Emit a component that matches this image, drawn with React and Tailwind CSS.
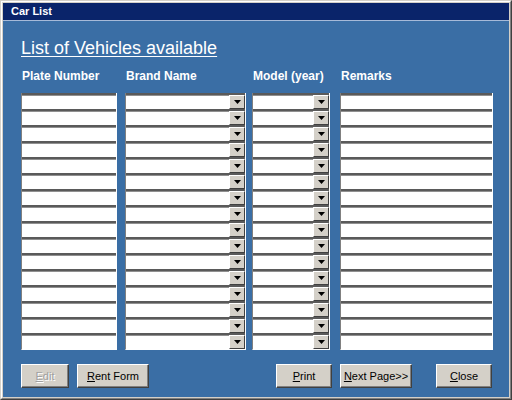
import React from 'react';

const ROWS = 16;

const columns = [
  { label: 'Plate Number', width: 'w-[96px]', combo: false },
  { label: 'Brand Name', width: 'w-[121px]', combo: true },
  { label: 'Model (year)', width: 'w-[78px]', combo: true },
  { label: 'Remarks', width: 'w-[153px]', combo: false },
];

function DropButton() {
  return (
    <div className="w-[16px] h-full bg-[#d4d0c8] border border-t-white border-l-white border-r-[#404040] border-b-[#404040] flex items-center justify-center">
      <svg width="7" height="4" viewBox="0 0 7 4">
        <path d="M0 0h7L3.5 4z" fill="#000" />
      </svg>
    </div>
  );
}

function Column({ label, width, combo }) {
  return (
    <div className={width}>
      <div className="h-[12px] pl-px text-[12px] leading-[12px] font-bold text-white whitespace-nowrap">{label}</div>
      <div className="mt-[11px] border-l border-r border-b border-l-[#808080] border-r-white border-b-white">
        {Array.from({ length: ROWS }).map((_, i) => (
          <div
            key={i}
            className="h-[16px] border-t-2 border-t-[#5a5a5a] bg-white flex justify-end shadow-[inset_0_1px_0_#909090]"
          >
            {combo && <DropButton />}
          </div>
        ))}
      </div>
    </div>
  );
}

function WinButton({ children, width, disabled, className = '' }) {
  return (
    <button
      className={`${width} h-[24px] bg-[#d4d0c8] border border-t-white border-l-white border-r-[#404040] border-b-[#404040] shadow-[inset_-1px_-1px_0_#808080] text-[11px] ${
        disabled ? 'text-[#a0a0a0] [text-shadow:1px_1px_0_#fff]' : 'text-black'
      } ${className}`}
    >
      {children}
    </button>
  );
}

export default function App() {
  return (
    <div
      className="w-[512px] h-[400px] border border-t-[#d4d0c8] border-l-[#d4d0c8] border-r-[#404040] border-b-[#404040]"
      style={{ fontFamily: '"Liberation Sans", Arial, sans-serif' }}
    >
      <div className="h-full border border-t-white border-l-white border-r-[#808080] border-b-[#808080] bg-[#d4d0c8] p-px flex flex-col">
        <div className="h-[17px] bg-[#0a246a] text-white text-[11px] font-bold leading-[17px] pl-[8px]">Car List</div>
        <div className="h-px bg-[#a6bad8]" />
        <div className="flex-1 bg-[#3a6ea5] pl-[18px] pr-[16px] pt-[18px]">
          <h1 className="text-[18px] leading-[18px] h-[18px] text-white underline underline-offset-[2px] decoration-1">
            List of Vehicles available
          </h1>
          <div className="mt-[13px] flex">
            <Column {...columns[0]} />
            <div className="ml-[8px]">
              <Column {...columns[1]} />
            </div>
            <div className="ml-[6px]">
              <Column {...columns[2]} />
            </div>
            <div className="ml-[10px]">
              <Column {...columns[3]} />
            </div>
          </div>
          <div className="mt-[14px] flex">
            <WinButton width="w-[48px]" disabled>
              <span className="underline">E</span>dit
            </WinButton>
            <WinButton width="w-[72px]" className="ml-[8px]">
              <span className="underline">R</span>ent Form
            </WinButton>
            <WinButton width="w-[56px]" className="ml-auto">
              <span className="underline">P</span>rint
            </WinButton>
            <WinButton width="w-[72px]" className="ml-[8px]">
              <span className="underline">N</span>ext Page&gt;&gt;
            </WinButton>
            <WinButton width="w-[56px]" className="ml-[24px] mr-px">
              <span className="underline">C</span>lose
            </WinButton>
          </div>
        </div>
      </div>
    </div>
  );
}
